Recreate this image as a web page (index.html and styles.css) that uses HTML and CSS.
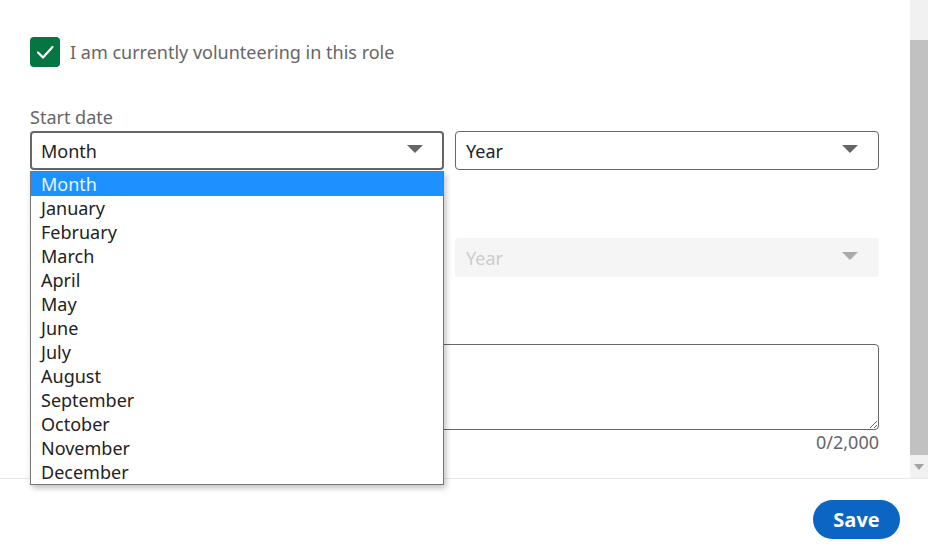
FILE: index.html
```html
<!DOCTYPE html>
<html lang="en">
<head>
<meta charset="utf-8">
<title>Volunteer experience</title>
<link rel="stylesheet" href="styles.css">
</head>
<body>
<div class="modal">
  <div class="content">
    <div class="scroll-area">
      <div class="check-row">
        <span class="checkbox">
          <svg width="30" height="30" viewBox="0 0 30 30"><path d="M8 15.5 L13 20.5 L22.5 10" fill="none" stroke="#fff" stroke-width="2.2" stroke-linecap="round" stroke-linejoin="round"/></svg>
        </span>
        <span class="check-label">I am currently volunteering in this role</span>
      </div>

      <div class="label label-start">Start date</div>
      <div class="select-row">
        <div class="select-wrap select-wrap-month">
          <div class="select select-focus">
            <span class="select-text">Month</span>
            <svg class="arrow" width="16" height="8" viewBox="0 0 16 8"><path d="M0 0 H16 L8 8 Z" fill="#666"/></svg>
          </div>
          <ul class="dropdown">
            <li class="option option-active">Month</li>
            <li class="option">January</li>
            <li class="option">February</li>
            <li class="option">March</li>
            <li class="option">April</li>
            <li class="option">May</li>
            <li class="option">June</li>
            <li class="option">July</li>
            <li class="option">August</li>
            <li class="option">September</li>
            <li class="option">October</li>
            <li class="option">November</li>
            <li class="option">December</li>
          </ul>
        </div>
        <div class="select-wrap">
          <div class="select">
            <span class="select-text">Year</span>
            <svg class="arrow" width="16" height="8" viewBox="0 0 16 8"><path d="M0 0 H16 L8 8 Z" fill="#666"/></svg>
          </div>
        </div>
      </div>

      <div class="label label-end"></div>
      <div class="select-row">
        <div class="select-wrap select-wrap-month">
          <div class="select select-disabled"></div>
        </div>
        <div class="select-wrap">
          <div class="select select-disabled">
            <span class="select-text">Year</span>
            <svg class="arrow" width="16" height="8" viewBox="0 0 16 8"><path d="M0 0 H16 L8 8 Z" fill="#aaa"/></svg>
          </div>
        </div>
      </div>

      <div class="label label-desc"></div>
      <textarea class="textarea"></textarea>
      <div class="counter">0/2,000</div>
    </div>
    <div class="scrollbar">
      <div class="thumb"></div>
      <div class="scroll-arrow">
        <svg width="10" height="6" viewBox="0 0 10 6"><path d="M0 0 H10 L5 6 Z" fill="#a3a3a3"/></svg>
      </div>
    </div>
  </div>
  <div class="footer">
    <button class="save">Save</button>
  </div>
</div>
</body>
</html>
```

FILE: styles.css
```css
* { box-sizing: border-box; }
html, body {
  margin: 0;
  padding: 0;
  width: 928px;
  height: 557px;
  overflow: hidden;
  background: #fff;
  font-family: "Noto Sans", "Open Sans", sans-serif;
}
.modal {
  display: flex;
  flex-direction: column;
  height: 557px;
}
.content {
  display: flex;
  height: 478px;
  flex: none;
  position: relative;
  z-index: 2;
}
.scroll-area {
  flex: 1;
  padding: 0 31px 0 30px;
}
.check-row {
  display: flex;
  align-items: center;
  gap: 10px;
  margin-top: 37px;
  height: 30px;
}
.checkbox {
  width: 30px;
  height: 30px;
  border-radius: 4px;
  background: #057642;
  display: block;
  flex: none;
}
.checkbox svg { display: block; }
.check-label {
  font-size: 18px;
  color: #666;
  line-height: 24px;
}
.label {
  font-size: 18px;
  line-height: 24px;
  height: 24px;
  color: #666;
  margin-bottom: 2px;
}
.label-start { margin-top: 38px; }
.label-end { margin-top: 42px; }
.label-desc { margin-top: 41px; }
.select-row {
  display: flex;
  gap: 11px;
}
.select-wrap {
  position: relative;
  flex: 1;
}
.select-wrap-month {
  flex: 0 0 414px;
}
.select {
  height: 39px;
  border: 1px solid #666;
  border-radius: 4px;
  display: flex;
  align-items: center;
  justify-content: space-between;
  padding: 0 20px 0 10px;
  font-size: 18px;
  color: #222;
  background: #fff;
}
.select-focus {
  border: 2px solid #666;
  padding-left: 9px;
  padding-right: 19px;
}
.select-disabled {
  border-color: #f5f5f5;
  background: #f5f5f5;
  color: #ccc;
}
.arrow { display: block; margin-top: -4px; }
.dropdown {
  position: absolute;
  top: 40px;
  left: 0;
  right: 0;
  margin: 0;
  padding: 0;
  list-style: none;
  background: #fff;
  border: 1px solid #767676;
  box-shadow: 2px 3px 6px rgba(0, 0, 0, 0.25);
  z-index: 10;
}
.option {
  height: 24px;
  line-height: 24px;
  padding-left: 10px;
  font-size: 18px;
  color: #222;
}
.option-active {
  background: #1e90ff;
  color: #e8f6ff;
}
.textarea {
  display: block;
  width: 100%;
  height: 86px;
  border: 1px solid #666;
  border-radius: 4px;
  resize: vertical;
  font-family: inherit;
  margin: 0;
}
.counter {
  text-align: right;
  font-size: 18px;
  line-height: 24px;
  color: #666;
}
.scrollbar {
  width: 18px;
  flex: none;
  background: #f1f1f1;
  display: flex;
  flex-direction: column;
  padding-top: 40px;
}
.thumb {
  flex: 1;
  background: #c1c1c1;
}
.scroll-arrow {
  height: 23px;
  display: flex;
  align-items: center;
  justify-content: center;
}
.footer {
  flex: 1;
  border-top: 1px solid #e8e8e8;
  display: flex;
  justify-content: flex-end;
  padding: 21px 28px 0 0;
  position: relative;
  z-index: 1;
}
.save {
  width: 87px;
  height: 39px;
  border: none;
  border-radius: 20px;
  background: #0a66c2;
  color: #fff;
  font-family: "Open Sans", "Noto Sans", sans-serif;
  font-weight: 700;
  font-size: 20px;
  padding: 0;
  cursor: pointer;
}
```
